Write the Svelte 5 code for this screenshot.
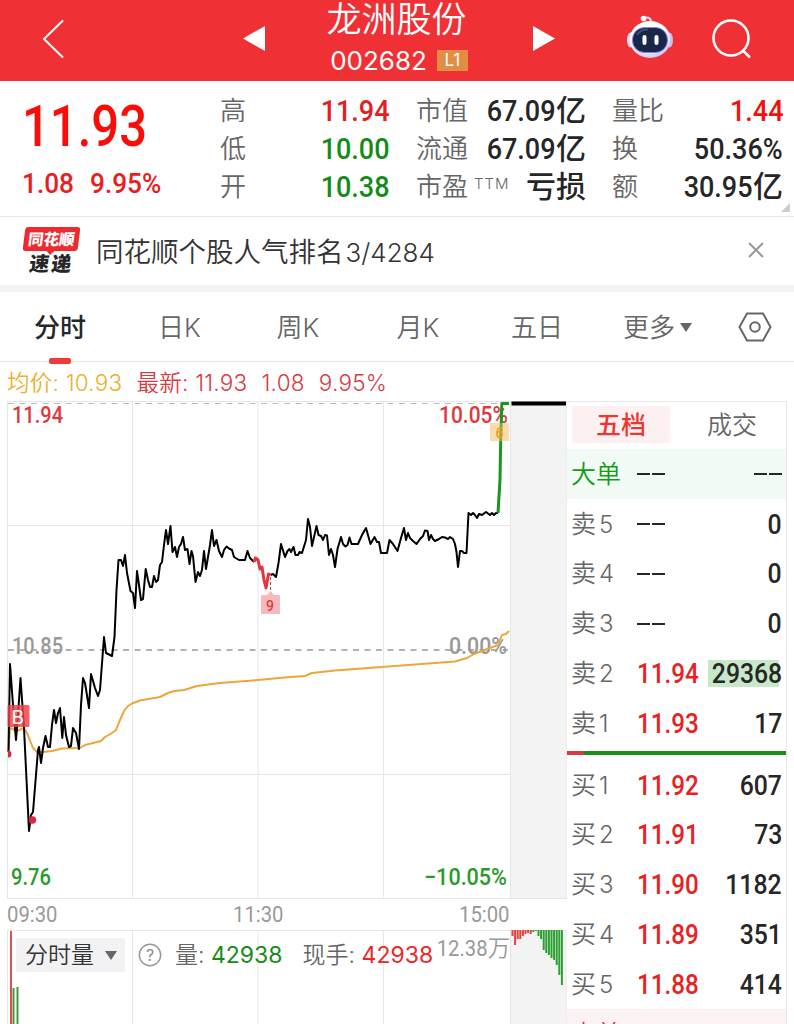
<script lang="ts">
    interface Level {
        label: string
        index: number
        price: string
        volume: string
        isLarge?: boolean
    }

    const stats = [
        [
            { label: '高', value: '11.94', tone: 'up' },
            { label: '低', value: '10.00', tone: 'down' },
            { label: '开', value: '10.38', tone: 'down' },
        ],
        [
            { label: '市值', value: '67.09', unit: '亿' },
            { label: '流通', value: '67.09', unit: '亿' },
            { label: '市盈', note: 'TTM', value: '', unit: '亏损' },
        ],
        [
            { label: '量比', value: '1.44', tone: 'bright' },
            { label: '换', value: '50.36%' },
            { label: '额', value: '30.95', unit: '亿' },
        ],
    ]

    const periods = ['分时', '日K', '周K', '月K', '五日']

    const asks: Level[] = [
        { label: '卖', index: 5, price: '', volume: '0' },
        { label: '卖', index: 4, price: '', volume: '0' },
        { label: '卖', index: 3, price: '', volume: '0' },
        { label: '卖', index: 2, price: '11.94', volume: '29368', isLarge: true },
        { label: '卖', index: 1, price: '11.93', volume: '17' },
    ]

    const bids: Level[] = [
        { label: '买', index: 1, price: '11.92', volume: '607' },
        { label: '买', index: 2, price: '11.91', volume: '73' },
        { label: '买', index: 3, price: '11.90', volume: '1182' },
        { label: '买', index: 4, price: '11.89', volume: '351' },
        { label: '买', index: 5, price: '11.88', volume: '414' },
    ]

    const morning =
        '8.5,752 10,664 13,705 16,740 18,715 20.5,678 24,728 29,831 31,815 33,812 38,750 39,747 41,763 43,748 45.5,736 48,747 50,747 52,725 54,710 56,723 58,713 60,708 62.3,738 64,717 66,735 69,747 71,746 73,728 76,733 79,749 81,705 83,678 85,683 89,708 91,674 95,688 98,696 100,690 104,637 106,653 112,656 114.5,637 116.5,590 118.5,560 121,560 123,566 125,555 127,573 130.5,591 133,593 135,608 137,571 139,585 141,600 143,599 145.7,569 148,580 150,587 152,587 154,576 156,582 158,580 160,565 162,562 164,545 166,530 168,544 170.5,526 172.5,552 175,547 177,557 179,547 181,544 183,537 185,550 187.5,549 189.5,564 191.5,551 193,556 195.5,582 198,572 200,576 202,570 204,551 206,569 208,557 210,545 212,530 214,546 216.5,540 219,551 222,557 224,550 226.5,546.5 229,548.5 232,550 234,557 239,560 245,560 247.5,551 250,558 254,562'
    const dip = '254,562 255.5,558 258,560 260,569 262,567 264,580 266,588 268.5,574 270.5,575'
    const afternoon =
        '270.5,575 273,574 276,577 278.5,563 281,544 285,557 287.5,551 289.5,549 291,552 293.5,547 295.5,555 298,555 299.5,552 302,553 306,540 308,519 310,527 312,546 316.5,526 318.5,535 321,536 323,540 325,535 327,535.5 329,555 331,549 333,555 335,567 337.5,549 341,537 343,544 345.5,546.5 347.5,545 349.5,537.5 351.5,544 358,544 362,535 366,528 370.5,544 374.5,537 377,542 379,542 381,553 387,553 389.5,540 393,544 397.5,551 401,538 404,528 406,540 408,533 410,538 413,541 416.5,544 420,539 423,536 425,530.5 427.5,531 429,540 431,535 433,539 435,541 439,539 442,537 445,537.5 448,539 450,537 453,539 455,544 456.5,552 458,567 460,551 462,551 464,553 466.5,553 468.5,513 471,515 473,513 475,515 477,518 479,514 482,515 486,512 490,515 492,513 494,515 496,513 498,513'
    const surge = '498,513 500,480 500.7,440 501.8,403.5 509,403.5'
    const average =
        '8.5,750 10,728 17,731 24,728 27,733 33,748 37,752 43,752 52,751 62,748.5 80,748 85,745 101,741 105,737 112,733 116,730 120,720 124,711 128,706 132,703.5 140,700.5 160,697 168,693 174,691 184,690 197,686 220,683 258,680 290,677 305,676 312,673 335,670.5 455,661.5 467,658 474,654 490,648 498,645 502,635 506,634 509,631'

    // Opening auction bars, hanging from the top of the volume pane
    const auction = [6, 15, 9, 9, 6, 4, 3, 4, 2, 1, 6, 9, 20, 23, 25, 28, 30, 35, 45, 55]
</script>

<div class="app">
    <header class="topbar">
        <svg class="back" width="22" height="40" viewBox="0 0 22 40">
            <path d="M21 1.5 2 20l19 18.5" fill="none" stroke="#fff" stroke-width="2" />
        </svg>
        <svg class="prev" width="22" height="26" viewBox="0 0 22 26"><path d="M22 0v25L0 12.5z" fill="#fff" /></svg>
        <div class="title">
            <h1>龙洲股份</h1>
            <div class="code">002682 <span class="badge">L1</span></div>
        </div>
        <svg class="next" width="22" height="26" viewBox="0 0 22 26"><path d="M0 0v25l22-12.5z" fill="#fff" /></svg>
        <svg class="robot" width="48" height="46" viewBox="0 0 48 46">
            <defs>
                <radialGradient id="shell" cx=".45" cy=".35" r=".65">
                    <stop offset=".65" stop-color="#fff" />
                    <stop offset="1" stop-color="#cbc5f8" />
                </radialGradient>
            </defs>
            <path d="M17 3.5c5-2 8-1 8.500 5" fill="none" stroke="#f7dcea" stroke-width="2" />
            <circle cx="17.500" cy="3.500" r="2.800" fill="#fff" />
            <ellipse cx="4.500" cy="25" rx="3.500" ry="7.500" fill="#dcd9ff" />
            <ellipse cx="43.500" cy="25" rx="3.500" ry="7.500" fill="#c5bdf7" />
            <ellipse cx="24" cy="24.500" rx="20.500" ry="18.500" fill="url(#shell)" />
            <rect x="6.500" y="12.500" width="35" height="25" rx="12" fill="#182647" stroke="#8b7df0" stroke-width="1" />
            <path d="M11 20q4-6 11-5.500" fill="none" stroke="#3b4d72" stroke-width="2" />
            <rect x="16.500" y="20" width="4" height="10" rx="2" fill="#fff" />
            <rect x="28.500" y="20" width="4" height="10" rx="2" fill="#fff" />
        </svg>
        <svg class="search" width="40" height="40" viewBox="0 0 40 40" fill="none" stroke="#fff" stroke-width="2.500">
            <circle cx="19" cy="19" r="17.500" />
            <path d="m30.500 31 7.500 7.500" />
        </svg>
    </header>

    <section class="quote">
        <div class="last">
            <div class="price din">11.93</div>
            <div class="change"><span class="din">1.08</span><span class="din">9.95%</span></div>
        </div>
        {#each stats as column, i (i)}
            <dl class="stats">
                {#each column as stat (stat.label)}
                    <div class="stat">
                        <dt>{stat.label}{#if stat.note}<sup>{stat.note}</sup>{/if}</dt>
                        <dd class={stat.tone}>
                            <span class="din">{stat.value}</span>{#if stat.unit}<span class="unit">{stat.unit}</span>{/if}
                        </dd>
                    </div>
                {/each}
            </dl>
        {/each}
        <i class="corner"></i>
    </section>

    <section class="notice">
        <div class="logo">
            <span class="logo-top">同花顺</span>
            <span class="logo-bottom">速递</span>
        </div>
        <p>同花顺个股人气排名<span>3/4284</span></p>
        <svg width="16" height="16" viewBox="0 0 16 16"><path d="m1 1 14 14M15 1 1 15" stroke="#999" stroke-width="2" /></svg>
    </section>

    <nav class="periods">
        {#each periods as period, i (period)}
            <span class="period" class:is-active={i === 0}>{period}</span>
        {/each}
        <span class="period more">更多<i></i></span>
        <svg class="settings" width="34" height="30" viewBox="0 0 34 30" fill="none" stroke="#666" stroke-width="2">
            <path d="M9 1.500h16L32.500 15 25 28.500H9L1.500 15z" />
            <circle cx="17" cy="15" r="4.800" />
        </svg>
    </nav>

    <div class="legend">
        <span class="avg">均价: 10.93</span>
        <span>最新: 11.93</span>
        <span>1.08</span>
        <span>9.95%</span>
    </div>

    <main>
        <div class="chart">
            <svg class="price-pane" width="567" height="498" viewBox="0 401 567 498">
                <rect x="511" y="402" width="56" height="497" fill="#f3f3f4" />
                <g class="grid">
                    <path d="M7.500 401.500H567M7.500 525.500H511M7.500 774.500H511M7.500 898.500H567" />
                    <path d="M7.500 401v498M132.500 401v498M258 401v498M383.500 401v498M510.500 401v498M567 401v498" />
                </g>
                <path d="M8 403.500h500" class="dash" stroke="#bbb" stroke-dasharray="6 5.500" />
                <path d="M8 650h500" class="dash" stroke="#999" stroke-dasharray="6 5.500" stroke-width="1.500" />
                <g class="axis">
                    <text x="12" y="423" textLength="51" lengthAdjust="spacingAndGlyphs" fill="#dc3b40">11.94</text>
                    <text x="439" y="423" textLength="69" lengthAdjust="spacingAndGlyphs" fill="#dc3b40">10.05%</text>
                    <text x="12" y="654" textLength="51" lengthAdjust="spacingAndGlyphs" fill="#999">10.85</text>
                    <text x="449" y="654" textLength="58" lengthAdjust="spacingAndGlyphs" fill="#999">0.00%</text>
                    <text x="11" y="885" textLength="40" lengthAdjust="spacingAndGlyphs" fill="#2b9a2b">9.76</text>
                    <text x="424" y="885" textLength="83" lengthAdjust="spacingAndGlyphs" fill="#2b9a2b">−10.05%</text>
                </g>
                <polyline points={average} class="line" stroke="#eba63c" />
                <polyline points={morning} class="line" stroke="#000" />
                <polyline points={afternoon} class="line" stroke="#000" />
                <polyline points={dip} class="line thick" stroke="#e4353d" />
                <polyline points={surge} class="line thick" stroke="#17981d" />
                <rect x="490" y="423" width="19" height="18" fill="#f9b95a" fill-opacity=".5" />
                <text x="495.500" y="438" class="mark" fill="#f2991d">6</text>
                <path d="M511.500 403.500h54.500" stroke="#000" stroke-width="4" />
                <path d="M8.500 727v24" stroke="#000" stroke-width="1" stroke-dasharray="2 1" />
                <path d="M8 750.500a3.500 3.500 0 0 1 0 7z" fill="#dc2740" />
                <circle cx="32.500" cy="820" r="3.700" fill="#dc2740" />
                <rect x="7.500" y="705" width="22" height="22" rx="1.500" fill="#ee4047" fill-opacity=".82" />
                <text x="11.500" y="723.500" class="buy">B</text>
                <path d="M270.500 577v15" stroke="#dc3b40" stroke-dasharray="3 2" />
                <path d="M261 596q0-1 1-1h5l3.500-4 3.500 4h5q1 0 1 1v18h-19z" fill="#f6babb" />
                <text x="266" y="610.500" class="mark" fill="#dc3b40">9</text>
            </svg>
            <div class="times">
                <span class="din">09:30</span>
                <span class="din">11:30</span>
                <span class="din">15:00</span>
            </div>
            <div class="volume-pane">
                <svg class="bars" width="567" height="94" viewBox="0 0 567 94">
                    <rect x="511" width="56" height="94" fill="#f3f3f4" />
                    <g class="grid">
                        <path d="M7.500 .5H567M7.500 0v94M132.500 0v94M258 0v94M383.500 0v94M510.500 0v94M567 0v94" />
                    </g>
                    <path d="M11 1v93" stroke="#d95252" stroke-width="2" />
                    <path d="M13.500 58v36M17.500 57v37" stroke="#43973f" stroke-width="2" />
                    {#each auction as height, i (i)}
                        <rect x={511.5 + i * 2.6} y="0" width="2" {height} fill={i < 8 ? '#e8403e' : '#2ba02f'} />
                    {/each}
                </svg>
                <div class="indicator">
                    <span class="picker">分时量<i></i></span>
                    <svg width="24" height="24" viewBox="0 0 24 24">
                        <circle cx="12" cy="12" r="10.700" fill="none" stroke="#999" stroke-width="1.500" />
                        <text x="12" y="18" text-anchor="middle" class="help">?</text>
                    </svg>
                    <span class="item">量: <b class="down">42938</b></span>
                    <span class="item">现手: <b class="now">42938</b></span>
                    <span class="peak"><span class="din">12.38</span>万</span>
                </div>
            </div>
        </div>

        <aside class="book">
            <div class="book-tabs">
                <span class="is-active">五档</span>
                <span>成交</span>
            </div>
            <div class="row big">
                <span>大单</span>
                <span class="price none"><i></i><i></i></span>
                <span class="volume none"><i></i><i></i></span>
            </div>
            {#each asks as level (level.index)}
                {@render row(level)}
            {/each}
            <div class="ratio"></div>
            {#each bids as level (level.index)}
                {@render row(level)}
            {/each}
            <div class="row big sell"><span>大单</span></div>
        </aside>
    </main>
</div>

{#snippet row(level: Level)}
    <div class="row">
        <span>{level.label}<em>{level.index}</em></span>
        {#if level.price}
            <span class="price"><span class="din">{level.price}</span></span>
        {:else}
            <span class="price none"><i></i><i></i></span>
        {/if}
        <span class="volume" class:is-large={level.isLarge}><span class="din">{level.volume}</span></span>
    </div>
{/snippet}

<style>
    :global(body) {
        margin: 0;
        background: #fff;
    }

    .app {
        width: 794px;
        height: 1024px;
        overflow: hidden;
        background: #fff;
        color: #666;
        font-family: Inter, 'Noto Sans CJK SC', sans-serif;
        font-weight: 350;
    }

    .app * {
        box-sizing: border-box;
    }

    svg {
        display: block;
        flex: none;
    }

    /* Narrow numerals */
    .din {
        display: inline-block;
        font-family: Roboto, sans-serif;
        font-weight: 500;
        transform: scaleX(0.9);
        transform-origin: right;
    }

    .topbar {
        display: flex;
        height: 81px;
        background: #ef3136;
        color: #fff;
    }

    .back {
        margin: 19px 0 0 42px;
    }

    .prev {
        margin: 26px 0 0 179px;
    }

    .title {
        width: 268px;
        text-align: center;
    }

    h1 {
        margin: 0 0 0 -5px;
        height: 43px;
        font-size: 35px;
        line-height: 38px;
        font-weight: 350;
    }

    .code {
        display: flex;
        align-items: center;
        justify-content: center;
        gap: 10px;
        height: 34px;
        font-size: 26px;
        font-weight: 400;
    }

    .badge {
        width: 31px;
        height: 21px;
        background: #e18d42;
        font-size: 17px;
        line-height: 21px;
    }

    .next {
        margin-top: 26px;
    }

    .robot {
        margin: 15px 0 0 71px;
    }

    .search {
        margin: 19px 0 0 38px;
    }

    .quote {
        display: flex;
        position: relative;
        height: 136px;
        border-bottom: 1px solid #e8e8e8;
    }

    .last {
        width: 220px;
        padding: 13px 0 0 22px;
        color: #e7201d;
    }

    .last .price {
        height: 67px;
        color: #f90d09;
        font-size: 57px;
        line-height: 66px;
        transform: scaleX(0.86);
        transform-origin: left;
    }

    .last .din {
        transform-origin: left;
    }

    .change {
        display: flex;
        gap: 11px;
        font-size: 28.5px;
        line-height: 45px;
    }

    .change .din {
        transform: scaleX(0.92);
    }

    .stats {
        width: 170px;
        margin: 10px 26px 0 0;
    }

    .stats:nth-of-type(3) {
        width: 171px;
        margin-right: 0;
    }

    .stat {
        display: flex;
        justify-content: space-between;
        height: 38px;
        line-height: 38px;
        white-space: nowrap;
    }

    dt {
        position: relative;
        top: 1px;
        font-size: 26px;
    }

    sup {
        display: inline-block;
        margin-left: 6px;
        font-size: 15px;
        line-height: 16px;
        letter-spacing: 1px;
        vertical-align: 7px;
    }

    dd {
        margin: 0;
        color: #262626;
        font-size: 30px;
    }

    .unit {
        font-weight: 500;
    }

    .up {
        color: #e2201f;
    }

    .down {
        color: #158c18;
    }

    .bright {
        color: #f90d09;
    }

    .corner {
        position: absolute;
        right: 4px;
        bottom: 4px;
        border: solid transparent;
        border-width: 9px 0 0 9px;
        border-bottom: 9px solid #ccc;
        border-top: 0;
    }

    .notice {
        display: flex;
        align-items: center;
        height: 75px;
        padding: 0 30px 2px 23px;
        border-bottom: 7px solid #f4f4f4;
    }

    .logo {
        width: 57px;
        height: 47px;
        text-align: center;
        font-family: 'Noto Sans CJK SC', sans-serif;
        font-weight: 900;
    }

    .logo span {
        display: block;
        transform: skewX(-7deg);
    }

    .logo-top {
        position: relative;
        height: 24px;
        margin: 0 1px;
        border-radius: 3px;
        background: #ed2b2e;
        color: #fff;
        font-size: 15.5px;
        line-height: 23px;
    }

    .logo-top::after {
        content: '';
        position: absolute;
        left: 24px;
        top: 24px;
        border: 4px solid transparent;
        border-top-color: #ed2b2e;
        border-bottom: 0;
    }

    .logo-bottom {
        color: #262626;
        font-size: 20px;
        line-height: 24px;
        letter-spacing: 2px;
    }

    .notice p {
        flex: 1;
        margin: 0 0 0 16px;
        color: #333;
        font-size: 27.5px;
    }

    .notice p span {
        margin-left: 2px;
        font-size: 26px;
    }

    .periods {
        display: grid;
        grid-template-columns: 120px 119px 118px 122px 116px 125px 1fr;
        height: 70px;
        border-bottom: 1px solid #e6e6e6;
        font-size: 26px;
        line-height: 72px;
        text-align: center;
    }

    .period.is-active {
        position: relative;
        color: #262626;
        font-weight: 500;
    }

    .is-active.period::after {
        content: '';
        position: absolute;
        left: 49px;
        bottom: 0;
        width: 22px;
        height: 6px;
        border-radius: 2px;
        background: #ef3b35;
    }

    .more i,
    .picker i {
        display: inline-block;
        margin-left: 5px;
        border: 6px solid transparent;
        border-top: 9px solid #666;
        border-bottom: 0;
        vertical-align: 5px;
    }

    .settings {
        margin: 20px 0 0 18px;
    }

    .legend {
        display: flex;
        gap: 14px;
        height: 39px;
        padding-left: 7px;
        color: #d83a42;
        font-size: 22.5px;
        letter-spacing: 0.25px;
        line-height: 41px;
        white-space: nowrap;
    }

    .avg {
        color: #ebb12e;
    }

    main {
        display: flex;
    }

    .chart {
        width: 567px;
    }

    .grid {
        fill: none;
        stroke: #e6e6e6;
    }

    .dash {
        fill: none;
    }

    .line {
        fill: none;
        stroke-width: 2;
        stroke-linejoin: round;
    }

    .thick {
        stroke-width: 3;
    }

    .axis text {
        font: 500 23px Roboto, sans-serif;
    }

    .mark {
        font: 500 14px Roboto, sans-serif;
    }

    .buy {
        font: 400 19px Inter, sans-serif;
        fill: #fff;
    }

    .times {
        display: flex;
        height: 31px;
        padding-left: 7px;
        color: #999;
        font-size: 22.5px;
        line-height: 30px;
    }

    .times .din {
        width: 226px;
        font-weight: 400;
        transform-origin: left;
    }

    .times .din:last-child {
        width: auto;
    }

    .volume-pane {
        position: relative;
        height: 94px;
    }

    .bars {
        position: absolute;
    }

    .indicator {
        display: flex;
        position: relative;
        align-items: center;
        padding: 8px 0 0 16px;
        font-size: 23px;
        white-space: nowrap;
    }

    .picker {
        width: 109px;
        height: 34px;
        padding-left: 9px;
        background: #f2f1f3;
        color: #333;
        line-height: 35px;
    }

    .picker i {
        margin-left: 11px;
        vertical-align: 3px;
    }

    .indicator svg {
        margin: 0 13px 0 13px;
    }

    .help {
        font: 400 16px Inter, sans-serif;
        fill: #888;
    }

    .item {
        margin: -4px 20px 0 0;
    }

    .item b {
        font-weight: 400;
    }

    .now {
        color: #ee2626;
    }

    .peak {
        margin: -18px 0 0 -22px;
        color: #999;
        font-size: 22.5px;
    }

    .peak .din {
        font-weight: 400;
    }

    .book {
        width: 220px;
        border-top: 1px solid #e8e8e8;
        border-right: 1px solid #e8e8e8;
    }

    .book-tabs {
        display: flex;
        height: 47px;
        padding: 4px 0 6px 5px;
        font-size: 25px;
        line-height: 38px;
        text-align: center;
    }

    .book-tabs span {
        flex: 1;
        margin-right: 5px;
    }

    .book-tabs .is-active {
        flex: none;
        width: 98px;
        margin-right: 13px;
        background: #fdf0f1;
        color: #ed3632;
        font-weight: 500;
    }

    .row {
        display: grid;
        grid-template-columns: 66px 68px 1fr;
        align-items: center;
        height: 49.8px;
        padding: 1px 4px 0;
        font-size: 25px;
        line-height: 36px;
        white-space: nowrap;
    }

    .row em {
        margin-left: 3px;
        font-size: 24px;
        font-style: normal;
    }

    .row .price {
        color: #e9211f;
        font-size: 27.5px;
    }

    .row .price .din {
        transform: scaleX(0.88);
        transform-origin: left;
    }

    .row .volume {
        color: #262626;
        font-size: 27.5px;
        text-align: right;
    }

    .row .volume .din {
        transform: scaleX(0.9);
    }

    .row .is-large {
        margin-left: 3px;
        background: linear-gradient(#c8e8ca, #c8e8ca) left / 71px 27px no-repeat;
    }

    .row .is-large .din {
        margin-left: -12px;
    }

    .none {
        display: flex;
        gap: 2px;
    }

    .none i {
        width: 13px;
        height: 2px;
        background: #262626;
    }

    .volume.none {
        justify-content: flex-end;
    }

    .big {
        background: #f1faf5;
        color: #179a17;
    }

    .sell {
        background: #fdf2f3;
        color: #d83a42;
    }

    .ratio {
        height: 4px;
        margin: 3px 0 5px;
        background: linear-gradient(90deg, #d93a42 17px, #179018 17px);
    }
</style>
